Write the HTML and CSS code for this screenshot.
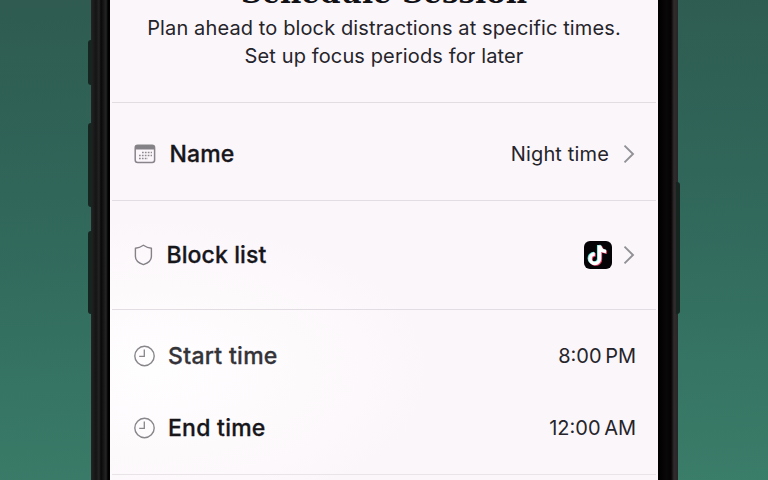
FILE: index.html
```html
<!DOCTYPE html>
<html lang="en">
<head>
<meta charset="utf-8">
<title>Schedule Session</title>
<link rel="stylesheet" href="styles.css">
</head>
<body>
<div class="phone">
  <i class="key key-action"></i><i class="key key-up"></i><i class="key key-down"></i><i class="key key-power"></i>
  <main class="screen">
    <header class="intro">
      <h1><span>Schedule Session</span></h1>
      <p class="line-one">Plan ahead to block distractions at specific times.</p>
      <p class="line-two">Set up focus periods for later</p>
    </header>
    <section class="row row-name">
      <svg class="icon" viewBox="0 0 22 22"><rect x="1.2" y="2.2" width="19.4" height="17.2" rx="2.5" fill="none" stroke="#88858a" stroke-width="1.5"/><path d="M1.2 6.5V4.5Q1.2 2.2 3.6 2.2H18.2Q20.6 2.2 20.6 4.5V6.5Z" fill="#858287"/><path d="M8 9.5H18M5 12.5H18M5 15.5H14" fill="none" stroke="#8e8b90" stroke-width="1.5" stroke-dasharray="1.7 1.2"/></svg>
      <span class="label label-name">Name</span>
      <span class="value value-name">Night time</span>
      <svg class="chevron" viewBox="0 0 12 20"><path d="M1.5 1.6L10 10L1.5 18.4" fill="none" stroke="#919095" stroke-width="1.9"/></svg>
    </section>
    <section class="row row-block">
      <svg class="icon" viewBox="0 0 22 22"><path d="M9.4 1.2Q13 3.7 17.4 4.3V12.5Q17.4 18 9.4 20.6Q1.4 18 1.4 12.5V4.3Q5.8 3.7 9.4 1.2Z" fill="none" stroke="#858287" stroke-width="1.4" stroke-linejoin="round"/></svg>
      <span class="label label-block">Block list</span>
      <svg class="app" viewBox="0 0 28 28"><rect width="28" height="28" rx="6" fill="#050306"/><g fill="none" stroke-width="3.5"><path d="M15.5 4.5V17.7A4.7 4.7 0 1 1 10.8 13M15.5 4.5Q16.5 10 22 10.5" stroke="#63e5dc" transform="translate(-.8 -.5)"/><path d="M15.5 4.5V17.7A4.7 4.7 0 1 1 10.8 13M15.5 4.5Q16.5 10 22 10.5" stroke="#ef4870" transform="translate(.9 .7)"/><path d="M15.5 4.5V17.7A4.7 4.7 0 1 1 10.8 13M15.5 4.5Q16.5 10 22 10.5" stroke="#fff"/></g></svg>
      <svg class="chevron" viewBox="0 0 12 20"><path d="M1.5 1.6L10 10L1.5 18.4" fill="none" stroke="#919095" stroke-width="1.9"/></svg>
    </section>
    <section class="times">
      <div class="row row-time">
        <svg class="icon" viewBox="0 0 22 22"><circle cx="10.5" cy="11" r="9.7" fill="none" stroke="#88868a" stroke-width="1.4"/><path d="M10.3 4.6V11.3H5.2" fill="none" stroke="#88868a" stroke-width="1.3"/></svg>
        <span class="label label-start">Start time</span>
        <span class="value value-start">8:00&#8201;PM</span>
      </div>
      <div class="row row-time">
        <svg class="icon" viewBox="0 0 22 22"><circle cx="10.5" cy="11" r="9.7" fill="none" stroke="#88868a" stroke-width="1.4"/><path d="M10.3 4.6V11.3H5.2" fill="none" stroke="#88868a" stroke-width="1.3"/></svg>
        <span class="label label-end">End time</span>
        <span class="value value-end">12:00&#8201;AM</span>
      </div>
    </section>
  </main>
</div>
</body>
</html>
```
FILE: styles.css
```css
* { box-sizing: border-box; }
body {
  margin: 0;
  height: 480px;
  overflow: hidden;
  background: linear-gradient(178deg, #2f5b50 0%, #30675a 42%, #3a7d69 100%);
  font-family: Inter, "Liberation Sans", sans-serif;
  color: #25242a;
}
.phone {
  position: relative;
  width: 587px;
  height: 480px;
  margin-left: 91px;
  padding: 0 20px 0 19px;
  background: linear-gradient(90deg, #252424 0, #141414 5px, #242424 8px, #090909 10px, #242424 15px, #000 17px, #000 20px, #000 568px, #090708 575px, #050304 580px, #302b2c 583px, #292526 587px);
}
.key { position: absolute; width: 4px; background: #172521; }
.key-action { left: -3px; top: 40px; height: 45px; border-radius: 3px 0 0 3px; }
.key-up { left: -3px; top: 123px; height: 84px; border-radius: 3px 0 0 3px; }
.key-down { left: -3px; top: 231px; height: 83px; border-radius: 3px 0 0 3px; }
.key-power { right: -2px; top: 182px; height: 132px; border-radius: 0 3px 3px 0; }
.screen {
  height: 480px;
  padding: 0 2px;
  background: radial-gradient(ellipse 280px 150px at 40px 370px, #fffeff 0%, #fdfafc 55%, #fbf6fa 100%);
}
.intro { height: 102px; text-align: center; white-space: nowrap; }
h1 { height: 14px; margin: 0; display: flex; align-items: flex-end; justify-content: center; font: 700 29.4px/42px "DejaVu Serif", serif; color: #111014; }
p { margin: 0; font-size: 20px; line-height: 28px; letter-spacing: 0.12px; }
.row { display: flex; align-items: center; padding: 0 21px 0 22px; white-space: nowrap; }
.row-name, .row-block, .times { border-top: 1px solid #e1dde2; }
.row-name { height: 98px; padding-top: 5px; }
.row-block { height: 109px; }
.times { height: 166px; border-bottom: 1px solid #e8e4e8; padding-top: 10px; }
.row-time { height: 72px; padding-right: 20px; }
.row-time .icon { margin-left: -0.5px; }
.icon { flex: none; width: 22px; height: 22px; }
.label { font-size: 23px; font-weight: 500; line-height: 28px; color: #17161a; letter-spacing: 0.1px; -webkit-text-stroke: 0.3px currentColor; }
.label-name { margin-left: 13.5px; }
.label-block { margin-left: 10.5px; }
.label-start, .label-end { margin-left: 12.5px; }
.label-start { color: #343338; letter-spacing: 0.3px; }
.label-end { letter-spacing: 0.25px; }
.value { margin-left: auto; font-size: 20px; line-height: 28px; }
.value-name { letter-spacing: 0.15px; }
.chevron { width: 12px; height: 20px; margin-left: 14px; }
.app { width: 28px; height: 28px; margin-left: auto; }
.app + .chevron { margin-left: 11px; }
```
